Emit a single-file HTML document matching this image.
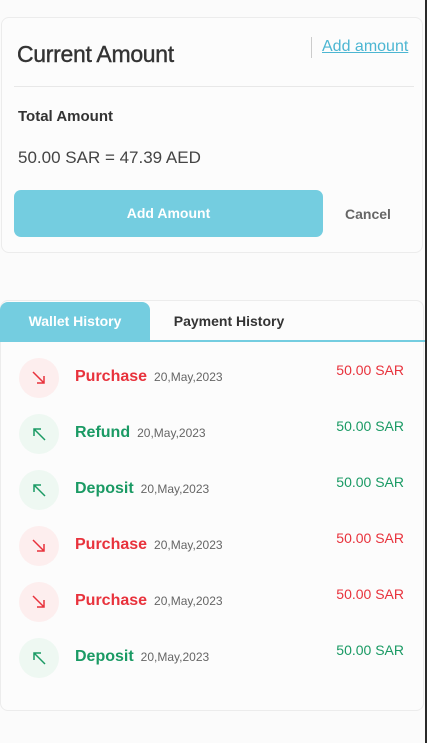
<!DOCTYPE html>
<html><head><style>
body{margin:0;width:427px;height:743px;background:#fbfbfb;font-family:"Liberation Sans",sans-serif;position:relative;overflow:hidden}
.sb{position:absolute;right:0;top:0;width:2px;height:743px;background:#2a2a2a}
.card1{position:absolute;left:1px;top:17px;width:422px;height:236px;border:1px solid #ececec;border-radius:8px;background:#fcfcfc;box-sizing:border-box}
.t{position:absolute;left:15px;top:23px;font-size:23px;color:#333;letter-spacing:-0.3px;-webkit-text-stroke:0.4px #333}
.vl{position:absolute;left:309px;top:19px;width:1px;height:21px;background:#ccc}
.add{position:absolute;left:320px;top:20px;font-size:16px;color:#4cb6d2;text-decoration:underline}
.hr{position:absolute;left:12px;top:68px;width:400px;height:1px;background:#e8e8e8}
.ta{position:absolute;left:16px;top:90px;font-size:15px;font-weight:bold;color:#333}
.cv{position:absolute;left:16px;top:130px;font-size:17px;color:#444}
.btn{position:absolute;left:12px;top:172px;width:309px;height:47px;border-radius:7px;background:#74cde0;color:#fff;font-weight:bold;font-size:14px;text-align:center;line-height:47px}
.cn{position:absolute;left:343px;top:188px;font-size:14px;font-weight:bold;color:#666}
.card2{position:absolute;left:0;top:300px;width:424px;height:411px;border:1px solid #ececec;border-radius:8px;background:#fcfcfc;box-sizing:border-box}
.tab1{position:absolute;left:0;top:302px;width:150px;height:38px;background:#74cde0;border-radius:8px 8px 0 0;color:#fff;font-weight:bold;font-size:14px;text-align:center;line-height:38px}
.tab2{position:absolute;left:150px;top:302px;width:158px;height:38px;color:#333;font-weight:bold;font-size:14px;text-align:center;line-height:38px}
.ul{position:absolute;left:0;top:340px;width:427px;height:2px;background:#74cde0}
.row{position:absolute;left:0;width:424px;height:56px}
.ic{position:absolute;left:19px;top:-20px;width:40px;height:40px;border-radius:50%}
.ic svg{position:absolute;left:12px;top:12px}
.nm{position:absolute;left:75px;top:-10px;font-size:16px;font-weight:bold}
.dt{font-size:12px;color:#666;font-weight:normal;margin-left:7px}
.am{position:absolute;right:20px;top:-16px;font-size:14px}
.r{color:#e8323c}.g{color:#1a9a64}
.rb{background:#fdeeee}.gb{background:#eef8f2}
</style></head><body>
<div class="card1">
<div class="t">Current Amount</div><div class="vl"></div><div class="add">Add amount</div>
<div class="hr"></div><div class="ta">Total Amount</div>
<div class="cv">50.00 SAR = 47.39 AED</div>
<div class="btn">Add Amount</div><div class="cn">Cancel</div>
</div>
<div class="card2"></div>
<div class="tab1">Wallet History</div><div class="tab2">Payment History</div><div class="ul"></div>

<div class="row" style="top:378px"><div class="ic rb"><svg width="16" height="16"><path d="M2 2L13 13M13 6V13H6" stroke="#e8323c" stroke-width="1.5" fill="none"/></svg></div><div class="nm r">Purchase<span class="dt">20,May,2023</span></div><div class="am r">50.00 SAR</div></div>
<div class="row" style="top:434px"><div class="ic gb"><svg width="16" height="16"><path d="M14 14L3 3M3 10V3H10" stroke="#1a9a64" stroke-width="1.5" fill="none"/></svg></div><div class="nm g">Refund<span class="dt">20,May,2023</span></div><div class="am g">50.00 SAR</div></div>
<div class="row" style="top:490px"><div class="ic gb"><svg width="16" height="16"><path d="M14 14L3 3M3 10V3H10" stroke="#1a9a64" stroke-width="1.5" fill="none"/></svg></div><div class="nm g">Deposit<span class="dt">20,May,2023</span></div><div class="am g">50.00 SAR</div></div>
<div class="row" style="top:546px"><div class="ic rb"><svg width="16" height="16"><path d="M2 2L13 13M13 6V13H6" stroke="#e8323c" stroke-width="1.5" fill="none"/></svg></div><div class="nm r">Purchase<span class="dt">20,May,2023</span></div><div class="am r">50.00 SAR</div></div>
<div class="row" style="top:602px"><div class="ic rb"><svg width="16" height="16"><path d="M2 2L13 13M13 6V13H6" stroke="#e8323c" stroke-width="1.5" fill="none"/></svg></div><div class="nm r">Purchase<span class="dt">20,May,2023</span></div><div class="am r">50.00 SAR</div></div>
<div class="row" style="top:658px"><div class="ic gb"><svg width="16" height="16"><path d="M14 14L3 3M3 10V3H10" stroke="#1a9a64" stroke-width="1.5" fill="none"/></svg></div><div class="nm g">Deposit<span class="dt">20,May,2023</span></div><div class="am g">50.00 SAR</div></div>
<div class="sb"></div>
</body></html>
